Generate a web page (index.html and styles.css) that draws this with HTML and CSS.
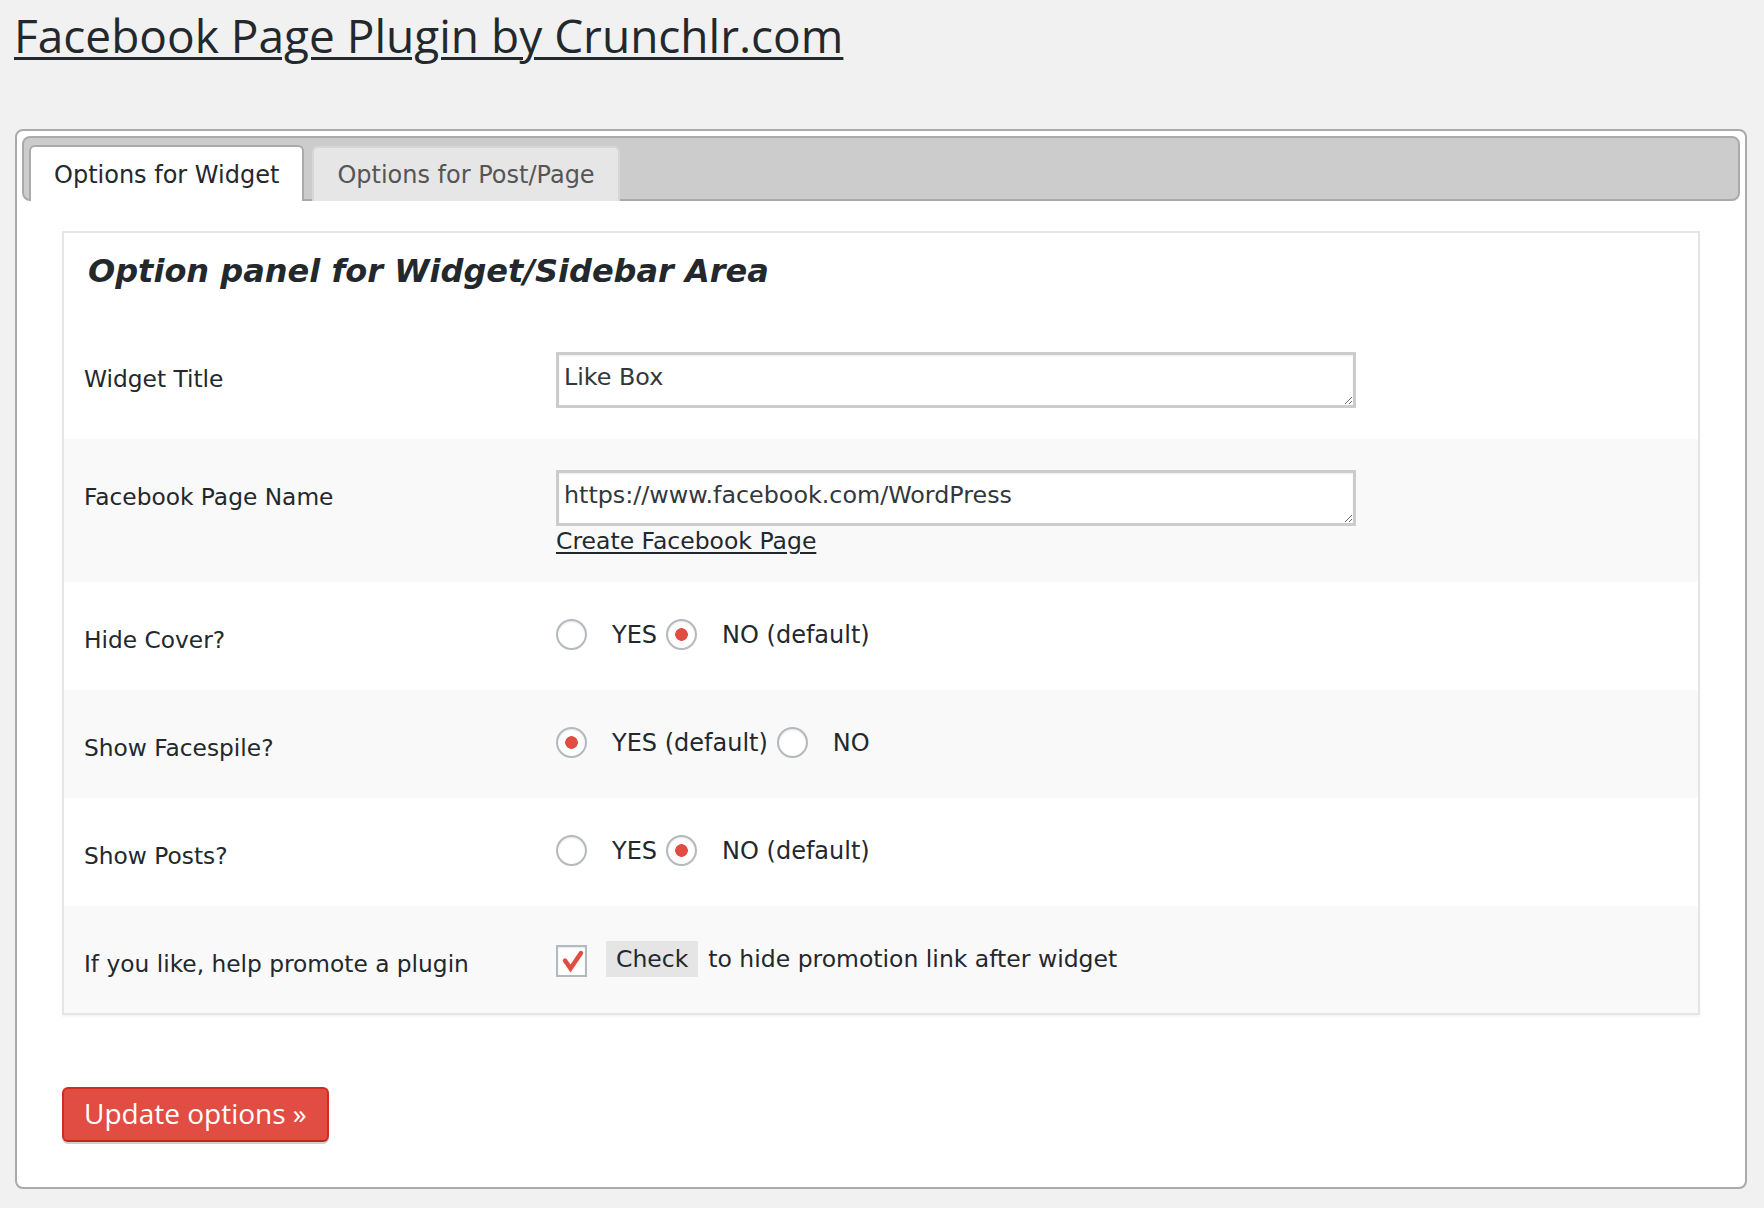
FILE: index.html
```html
<!DOCTYPE html>
<html lang="en">
<head>
<meta charset="utf-8">
<title>Facebook Page Plugin by Crunchlr.com</title>
<link rel="stylesheet" href="styles.css">
</head>
<body>
<div class="page">
  <h1 class="title"><a href="#">Facebook Page Plugin by Crunchlr.com</a></h1>

  <div class="tabs">
    <ul class="tab-nav">
      <li class="tab active">Options for Widget</li>
      <li class="tab">Options for Post/Page</li>
    </ul>

    <div class="tab-panel">
      <div class="options">
        <h3 class="options-title">Option panel for Widget/Sidebar Area</h3>

        <div class="row">
          <div class="label">Widget Title</div>
          <div class="value"><textarea class="field">Like Box</textarea></div>
        </div>

        <div class="row alt row-link">
          <div class="label">Facebook Page Name</div>
          <div class="value">
            <textarea class="field">https://www.facebook.com/WordPress</textarea>
            <a class="create-link" href="#">Create Facebook Page</a>
          </div>
        </div>

        <div class="row row-choice">
          <div class="label">Hide Cover?</div>
          <div class="value choices">
            <input class="radio" type="radio" name="cover">
            <span class="choice-text">YES</span>
            <input class="radio" type="radio" name="cover" checked>
            <span class="choice-text">NO (default)</span>
          </div>
        </div>

        <div class="row alt row-choice">
          <div class="label">Show Facespile?</div>
          <div class="value choices">
            <input class="radio" type="radio" name="faces" checked>
            <span class="choice-text">YES (default)</span>
            <input class="radio" type="radio" name="faces">
            <span class="choice-text">NO</span>
          </div>
        </div>

        <div class="row row-choice">
          <div class="label">Show Posts?</div>
          <div class="value choices">
            <input class="radio" type="radio" name="posts">
            <span class="choice-text">YES</span>
            <input class="radio" type="radio" name="posts" checked>
            <span class="choice-text">NO (default)</span>
          </div>
        </div>

        <div class="row alt row-choice row-last">
          <div class="label">If you like, help promote a plugin</div>
          <div class="value choices">
            <span class="checkbox">
              <svg width="27" height="28" viewBox="0 0 27 28" aria-hidden="true">
                <path d="M7 13.5 L12.5 21.5 L23 6" fill="none" stroke="#e14d43" stroke-width="4.5" stroke-linecap="round" stroke-linejoin="miter"/>
              </svg>
            </span>
            <span class="check-tag">Check</span>
            <span class="check-text">to hide promotion link after widget</span>
          </div>
        </div>
      </div>

      <button class="btn" type="button">Update options »</button>
    </div>
  </div>
</div>
</body>
</html>
```

FILE: styles.css
```css
* {
  box-sizing: border-box;
}

body {
  margin: 0;
  background: #f1f1f1;
  color: #23282d;
  font-family: "DejaVu Sans", Verdana, sans-serif;
  font-size: 23.5px;
}

.page {
  padding: 4px 17px 19px 15px;
}

.title {
  margin: 0 0 63px -1px;
  font: 400 46px/62px "Open Sans", sans-serif;
}

.title a {
  color: #23282d;
  text-decoration: underline;
  text-decoration-thickness: 3px;
  text-underline-offset: 4px;
}

/* tabs widget */
.tabs {
  background: #fff;
  border: 2px solid #aaa;
  border-radius: 8px;
  padding: 5px;
}

.tab-nav {
  display: flex;
  align-items: flex-end;
  gap: 8px;
  height: 65px;
  margin: 0;
  padding: 7px 5px 0;
  list-style: none;
  background: #ccc;
  border: 2px solid #aaa;
  border-radius: 8px;
}

.tab {
  height: 55px;
  margin-bottom: -2px;
  padding: 12px 23px 0;
  border: 2px solid #d6d6d6;
  border-bottom: 0;
  border-radius: 6px 6px 0 0;
  background: #e6e6e6;
  color: #555;
  font-size: 24px;
  line-height: 30px;
  white-space: nowrap;
}

.tab.active {
  height: 56px;
  padding-top: 13px;
  background: #fff;
  border-color: #aaa;
  color: #23282d;
}

.tab-panel {
  padding: 30px 40px 40px;
}

/* options box */
.options {
  background: #fff;
  border: 2px solid #e5e5e5;
  box-shadow: 0 2px 2px rgba(0, 0, 0, 0.04);
}

.options-title {
  margin: 18px 0 30px 24px;
  font-family: "DejaVu Sans", Verdana, sans-serif;
  font-style: italic;
  font-weight: bold;
  font-size: 32px;
  line-height: 40px;
  color: #23282d;
}

.row {
  display: grid;
  grid-template-columns: 472px 1fr;
  padding: 31px 20px;
}

.row.alt {
  background: #f9f9f9;
}

.row-link {
  padding-bottom: 28px;
}

.row-choice {
  padding-bottom: 34px;
}

.row-last {
  padding-bottom: 33px;
}

.label {
  padding-top: 12px;
  line-height: 30px;
  font-size: 23.3px;
  color: #23282d;
}

.field {
  display: block;
  width: 800px;
  height: 56px;
  margin: 0;
  padding: 7px 5px;
  border: 3px solid #cccccc;
  background: #fff;
  box-shadow: inset 0 1px 2px rgba(0, 0, 0, 0.07);
  color: #32373c;
  font-family: "DejaVu Sans", Verdana, sans-serif;
  font-size: 23.8px;
  line-height: 30px;
  overflow: hidden;
  resize: both;
}

.create-link {
  display: block;
  margin-top: 3px;
  line-height: 25px;
  color: #23282d;
  font-size: 23.5px;
  text-decoration: underline;
  text-underline-offset: 3px;
}

.choices {
  display: flex;
  align-items: center;
  height: 43px;
  font-size: 24px;
  color: #23282d;
}

.radio {
  appearance: none;
  -webkit-appearance: none;
  flex: none;
  width: 31px;
  height: 31px;
  margin: 0 25px 0 0;
  border: 2px solid #b4b9be;
  border-radius: 50%;
  background: #fff;
  box-shadow: inset 0 1px 2px rgba(0, 0, 0, 0.1);
}

.radio:checked {
  background: radial-gradient(circle, #e14d43 0 6px, #fff 6.6px);
}

.choice-text {
  margin-right: 9px;
  white-space: nowrap;
}

.checkbox {
  display: flex;
  align-items: center;
  justify-content: center;
  flex: none;
  width: 31px;
  height: 32px;
  margin: 4px 19px 0 0;
  border: 2px solid #b4b9be;
  background: #fff;
  box-shadow: inset 0 1px 2px rgba(0, 0, 0, 0.1);
}

.check-tag {
  height: 36px;
  margin-right: 10px;
  padding: 0 10px;
  background: #e5e5e5;
  line-height: 36px;
  font-size: 23.5px;
}

.check-text {
  font-size: 23.5px;
  white-space: nowrap;
}

.btn {
  display: block;
  height: 55px;
  margin-top: 72px;
  padding: 0 20px 2px;
  border: 2px solid #d02c21;
  border-bottom-color: #ba281e;
  border-radius: 6px;
  background: #e14d43;
  box-shadow: 0 2px 0 #cfcfcf;
  color: #fff;
  font-family: "Open Sans", sans-serif;
  font-size: 28px;
  line-height: 47px;
  cursor: pointer;
}
```
